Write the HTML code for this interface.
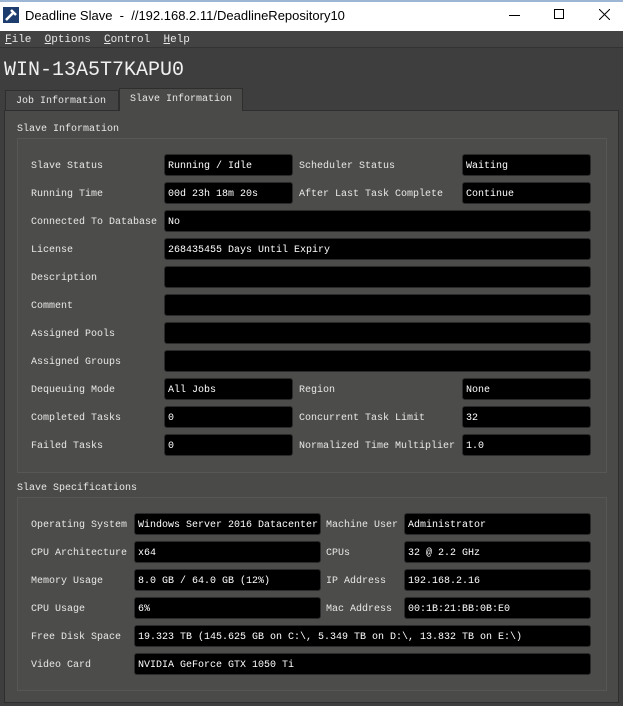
<!DOCTYPE html>
<html><head><meta charset="utf-8"><style>
*{margin:0;padding:0;box-sizing:border-box}
body{width:623px;height:706px;background:#3e3e3e;position:relative;overflow:hidden;font-family:"Liberation Mono","Noto Serif CJK SC",monospace;font-size:10px;color:#e8e8e8}
.a{position:absolute;white-space:nowrap}
.f{position:absolute;background:#000;border:1px solid #2a2a2a;border-radius:3px;height:22px;line-height:24px;padding-left:3px;color:#fff;overflow:hidden}
.l{position:absolute;line-height:26px;white-space:nowrap}
</style></head><body>
<div class="a" style="left:0;top:0;width:623px;height:31px;background:#fff;border-top:2px solid #9db6d6"></div>
<svg class="a" style="left:3px;top:7px" width="16" height="16"><rect width="16" height="16" fill="#1d3d6e"/><path d="M3 13 L10 6 M8 3 L13 8" stroke="#fff" stroke-width="2.5"/></svg>
<div class="a" style="left:25px;top:8px;font-family:'Liberation Sans',sans-serif;font-size:13px;color:#000">Deadline Slave &nbsp;- &nbsp;//192.168.2.11/DeadlineRepository10</div>
<div class="a" style="left:509px;top:15px;width:11px;height:1px;background:#000"></div>
<div class="a" style="left:554px;top:9px;width:10px;height:10px;border:1px solid #000"></div>
<svg class="a" style="left:599px;top:9px" width="11" height="11"><path d="M0 0L11 11M11 0L0 11" stroke="#000" stroke-width="1"/></svg>
<div class="a" style="left:0;top:31px;width:623px;height:17px;background:#434343;border-bottom:1px solid #333"></div>
<div class="a" style="left:5px;top:33px;line-height:14px;font-size:11px"><u>F</u>ile &nbsp;<u>O</u>ptions &nbsp;<u>C</u>ontrol &nbsp;<u>H</u>elp</div>
<div class="a" style="left:4px;top:59px;font-size:20px;line-height:24px;color:#f0f0f0">WIN-13A5T7KAPU0</div>
<div class="a" style="left:5px;top:90px;width:114px;height:21px;background:#444;border:1px solid #2e2e2e;border-bottom:none;line-height:22px;padding-left:10px">Job Information</div>
<div class="a" style="left:4px;top:110px;width:615px;height:593px;background:#4a4b48;border:1px solid #2e2e2e"></div>
<div class="a" style="left:119px;top:88px;width:124px;height:23px;background:#4a4b48;border:1px solid #2e2e2e;border-bottom:none;line-height:22px;padding-left:10px">Slave Information</div>
<div class="l" style="left:17px;top:117px">Slave Information</div>
<div class="a" style="left:17px;top:138px;width:590px;height:335px;border:1px solid #575855;background:#4c4d4a"></div>
<div class="l" style="left:17px;top:476px">Slave Specifications</div>
<div class="a" style="left:17px;top:497px;width:590px;height:194px;border:1px solid #575855;background:#4c4d4a"></div>

<div class="l" style="left:31px;top:154px">Slave Status</div><div class="f" style="left:164px;top:154px;width:129px">Running / Idle</div>
<div class="l" style="left:299px;top:154px">Scheduler Status</div><div class="f" style="left:462px;top:154px;width:129px">Waiting</div>
<div class="l" style="left:31px;top:182px">Running Time</div><div class="f" style="left:164px;top:182px;width:129px">00d 23h 18m 20s</div>
<div class="l" style="left:299px;top:182px">After Last Task Complete</div><div class="f" style="left:462px;top:182px;width:129px">Continue</div>
<div class="l" style="left:31px;top:210px">Connected To Database</div><div class="f" style="left:164px;top:210px;width:427px">No</div>
<div class="l" style="left:31px;top:238px">License</div><div class="f" style="left:164px;top:238px;width:427px">268435455 Days Until Expiry</div>
<div class="l" style="left:31px;top:266px">Description</div><div class="f" style="left:164px;top:266px;width:427px"></div>
<div class="l" style="left:31px;top:294px">Comment</div><div class="f" style="left:164px;top:294px;width:427px"></div>
<div class="l" style="left:31px;top:322px">Assigned Pools</div><div class="f" style="left:164px;top:322px;width:427px"></div>
<div class="l" style="left:31px;top:350px">Assigned Groups</div><div class="f" style="left:164px;top:350px;width:427px"></div>
<div class="l" style="left:31px;top:378px">Dequeuing Mode</div><div class="f" style="left:164px;top:378px;width:129px">All Jobs</div>
<div class="l" style="left:299px;top:378px">Region</div><div class="f" style="left:462px;top:378px;width:129px">None</div>
<div class="l" style="left:31px;top:406px">Completed Tasks</div><div class="f" style="left:164px;top:406px;width:129px">0</div>
<div class="l" style="left:299px;top:406px">Concurrent Task Limit</div><div class="f" style="left:462px;top:406px;width:129px">32</div>
<div class="l" style="left:31px;top:434px">Failed Tasks</div><div class="f" style="left:164px;top:434px;width:129px">0</div>
<div class="l" style="left:299px;top:434px">Normalized Time Multiplier</div><div class="f" style="left:462px;top:434px;width:129px">1.0</div>

<div class="l" style="left:31px;top:513px">Operating System</div><div class="f" style="left:134px;top:513px;width:187px">Windows Server 2016 Datacenter</div>
<div class="l" style="left:326px;top:513px">Machine User</div><div class="f" style="left:404px;top:513px;width:187px">Administrator</div>
<div class="l" style="left:31px;top:541px">CPU Architecture</div><div class="f" style="left:134px;top:541px;width:187px">x64</div>
<div class="l" style="left:326px;top:541px">CPUs</div><div class="f" style="left:404px;top:541px;width:187px">32 @ 2.2 GHz</div>
<div class="l" style="left:31px;top:569px">Memory Usage</div><div class="f" style="left:134px;top:569px;width:187px">8.0 GB / 64.0 GB (12%)</div>
<div class="l" style="left:326px;top:569px">IP Address</div><div class="f" style="left:404px;top:569px;width:187px">192.168.2.16</div>
<div class="l" style="left:31px;top:597px">CPU Usage</div><div class="f" style="left:134px;top:597px;width:187px">6%</div>
<div class="l" style="left:326px;top:597px">Mac Address</div><div class="f" style="left:404px;top:597px;width:187px">00:1B:21:BB:0B:E0</div>
<div class="l" style="left:31px;top:625px">Free Disk Space</div><div class="f" style="left:134px;top:625px;width:457px">19.323 TB (145.625 GB on C:\, 5.349 TB on D:\, 13.832 TB on E:\)</div>
<div class="l" style="left:31px;top:653px">Video Card</div><div class="f" style="left:134px;top:653px;width:457px">NVIDIA GeForce GTX 1050 Ti</div>
</body></html>
